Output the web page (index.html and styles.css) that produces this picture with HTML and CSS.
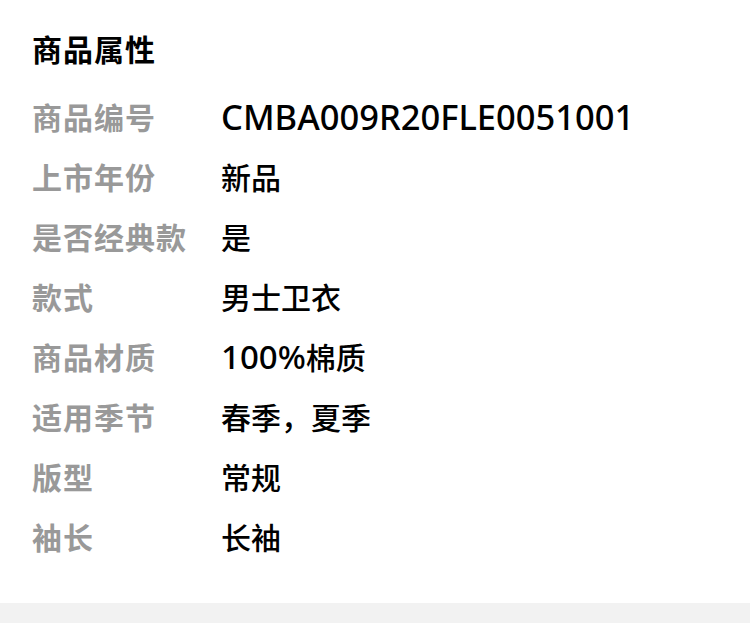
FILE: index.html
```html
<!DOCTYPE html>
<html lang="zh-CN">
<head>
    <meta charset="UTF-8">
    <meta name="viewport" content="width=device-width, initial-scale=1.0">
    <title>商品属性</title>
    <link rel="stylesheet" href="styles.css">
</head>
<body>
    <div class="attrs">
        <h2 class="attrs-title">商品属性</h2>
        <ul class="attr-list">
            <li class="attr-row"><span class="attr-name">商品编号</span><span class="attr-value code">CMBA009R20FLE0051001</span></li>
            <li class="attr-row"><span class="attr-name">上市年份</span><span class="attr-value">新品</span></li>
            <li class="attr-row"><span class="attr-name">是否经典款</span><span class="attr-value">是</span></li>
            <li class="attr-row"><span class="attr-name">款式</span><span class="attr-value">男士卫衣</span></li>
            <li class="attr-row"><span class="attr-name">商品材质</span><span class="attr-value"><span class="latin">100%</span>棉质</span></li>
            <li class="attr-row"><span class="attr-name">适用季节</span><span class="attr-value">春季，夏季</span></li>
            <li class="attr-row"><span class="attr-name">版型</span><span class="attr-value">常规</span></li>
            <li class="attr-row"><span class="attr-name">袖长</span><span class="attr-value">长袖</span></li>
        </ul>
    </div>
    <div class="divider"></div>
</body>
</html>
```

FILE: styles.css
```css
body {
    margin: 0;
    padding: 0;
    background: #fff;
    color: #000;
    font-family: "Noto Sans", "Noto Sans CJK SC", sans-serif;
}

.attrs {
    padding: 29px 0 37px 32px;
}

.attrs-title {
    margin: 0 0 15px;
    font-size: 30px;
    line-height: 42px;
    font-weight: 700;
    letter-spacing: 1px;
}

.attr-list {
    list-style: none;
    margin: 0;
    padding: 0;
}

.attr-row {
    display: flex;
    align-items: center;
    height: 60px;
}

.attr-name {
    width: 189px;
    flex-shrink: 0;
    color: #999;
    font-size: 30px;
    font-weight: 700;
    letter-spacing: 1px;
}

.attr-value {
    font-size: 30px;
    font-weight: 500;
}

/* latin runs render larger than the CJK text */
.attr-value.code {
    font-size: 34.5px;
}

.latin {
    font-size: 33px;
}

.divider {
    height: 20px;
    background: #f2f2f2;
}
```
